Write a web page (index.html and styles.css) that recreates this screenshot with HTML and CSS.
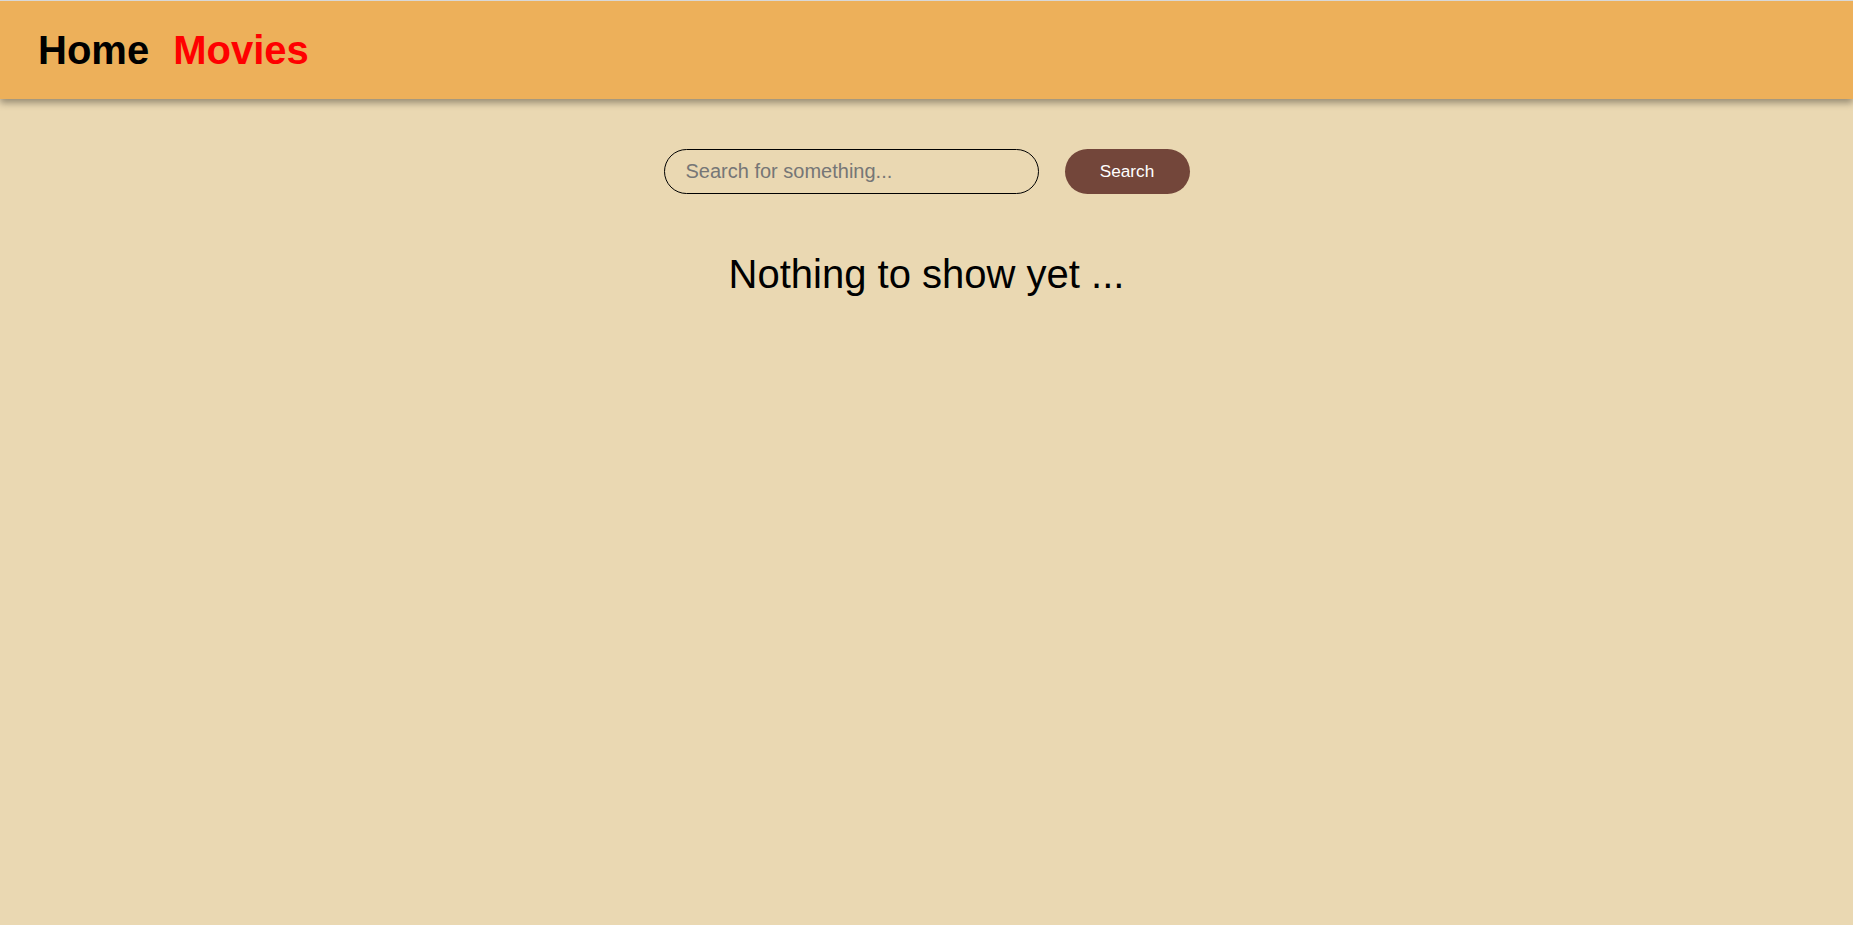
FILE: index.html
```html
<!DOCTYPE html>
<html lang="en">
<head>
<meta charset="utf-8">
<title>Movies</title>
<link rel="stylesheet" href="styles.css">
</head>
<body>
<header class="topbar">
  <a class="nav-link nav-home" href="#">Home</a>
  <a class="nav-link nav-active" href="#">Movies</a>
</header>
<main class="content">
  <form class="search-row">
    <input class="search-input" type="text" placeholder="Search for something...">
    <button class="search-btn" type="button">Search</button>
  </form>
  <h2 class="empty-msg">Nothing to show yet ...</h2>
</main>
</body>
</html>
```
FILE: styles.css
```css
html, body {
  margin: 0;
  padding: 0;
}
body {
  background: #ead8b2;
  font-family: "Liberation Sans", Arial, sans-serif;
  min-height: 100vh;
  border-top: 1px solid #d8d8d8;
  box-sizing: border-box;
}
.topbar {
  height: 98px;
  box-sizing: border-box;
  padding: 0 0 0 38px;
  background: #edb05a;
  display: flex;
  align-items: center;
  gap: 24px;
  box-shadow: 0 4px 7px rgba(0, 0, 0, 0.35);
  position: relative;
}
.nav-link {
  font-size: 40px;
  font-weight: bold;
  text-decoration: none;
  line-height: 1;
}
.nav-home { color: #000; }
.nav-active { color: #ff0000; }
.content {
  padding-top: 50px;
}
.search-row {
  display: flex;
  justify-content: center;
  align-items: center;
  gap: 26px;
  margin: 0;
}
.search-input {
  width: 375px;
  height: 45px;
  box-sizing: border-box;
  border: 1px solid #000;
  border-radius: 23px;
  background: transparent;
  padding: 0 21px;
  font-family: "Liberation Sans", Arial, sans-serif;
  font-size: 20px;
  color: #000;
  outline: none;
}
.search-input::placeholder {
  color: #767676;
}
.search-btn {
  width: 125px;
  height: 45px;
  box-sizing: border-box;
  border: none;
  border-radius: 23px;
  background: #73463a;
  color: #fff;
  font-family: "Liberation Sans", Arial, sans-serif;
  font-size: 17.2px;
  padding: 0;
  cursor: pointer;
}
.empty-msg {
  margin: 58px 0 0;
  text-align: center;
  font-weight: normal;
  font-size: 40px;
  color: #000;
}
```
